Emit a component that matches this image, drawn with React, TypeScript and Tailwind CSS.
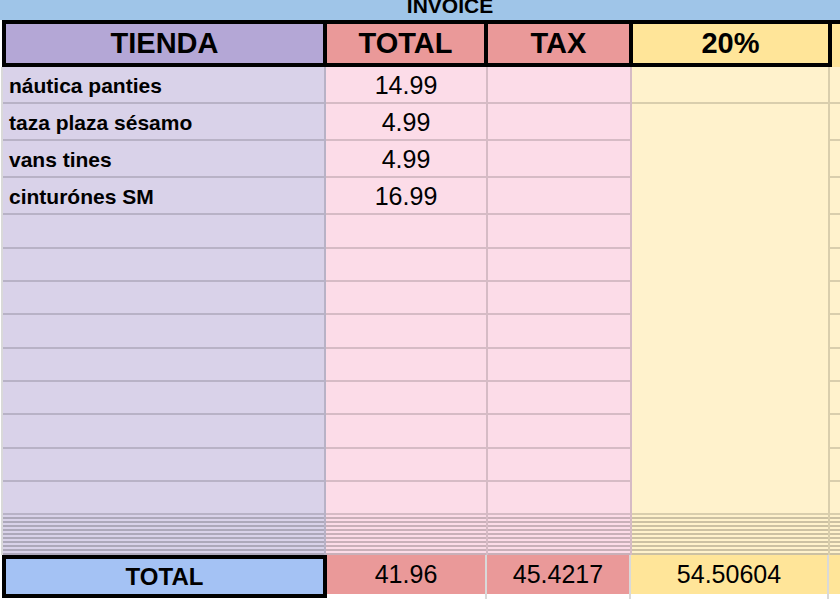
const font = "font-['Liberation_Sans',Arial,sans-serif]";

const rows = [
  { name: "náutica panties", total: "14.99", h: "h-[37px]" },
  { name: "taza plaza sésamo", total: "4.99", h: "h-[37px]" },
  { name: "vans tines", total: "4.99", h: "h-[37px]" },
  { name: "cinturónes SM", total: "16.99", h: "h-[37px]" },
  { name: "", total: "", h: "h-[34px]" },
  { name: "", total: "", h: "h-[33px]" },
  { name: "", total: "", h: "h-[33px]" },
  { name: "", total: "", h: "h-[34px]" },
  { name: "", total: "", h: "h-[33px]" },
  { name: "", total: "", h: "h-[33px]" },
  { name: "", total: "", h: "h-[34px]" },
  { name: "", total: "", h: "h-[33px]" },
  { name: "", total: "", h: "h-[33px]" },
];

// collapsed / hidden rows at the bottom of the sheet
const Stripes = () => (
  <>
    {Array.from({ length: 10 }).map((_, i) => (
      <div key={i} className="h-[4px] border-b-2 border-black/20" />
    ))}
  </>
);

export default function App() {
  return (
    <div className={`${font} w-[840px] h-[599px] overflow-hidden bg-white text-black`}>
      {/* title bar */}
      <div className="h-[20px] bg-[#9fc5e8] flex items-end justify-center overflow-hidden pb-[4px] pl-[60px]">
        <span className="text-[21px] leading-[21px] font-bold">INVOICE</span>
      </div>

      {/* header row */}
      <div className="flex h-[47px]">
        <div className="ml-[2px] w-[830px] flex gap-[4px] p-[4px] bg-black text-[29px] leading-none font-bold">
          <div className="w-[317px] bg-[#b4a7d6] flex items-center justify-center">TIENDA</div>
          <div className="w-[157px] bg-[#ea9999] flex items-center justify-center">TOTAL</div>
          <div className="w-[141px] bg-[#ea9999] flex items-center justify-center">TAX</div>
          <div className="flex-1 bg-[#ffe599] flex items-center justify-center">20%</div>
        </div>
        <div className="flex-1 border-t-4 border-black bg-[#ffe599]" />
      </div>

      {/* body */}
      <div className="flex ml-[1px] border-l-2 border-black/15">
        <div className="w-[323px] flex flex-col bg-[#d9d2e9] border-r-2 border-black/15">
          {rows.map((r, i) => (
            <div
              key={i}
              className={`${r.h} border-b-2 border-black/15 flex items-end pl-[6px] pb-[4px] text-[21px] leading-[24px] font-bold`}
            >
              {r.name}
            </div>
          ))}
          <Stripes />
        </div>
        <div className="w-[162px] flex flex-col bg-[#fcdce8] border-r-2 border-black/15">
          {rows.map((r, i) => (
            <div
              key={i}
              className={`${r.h} border-b-2 border-black/15 flex items-end justify-center pb-[3px] text-[25px] leading-[28px]`}
            >
              {r.total}
            </div>
          ))}
          <Stripes />
        </div>
        <div className="w-[144px] flex flex-col bg-[#fcdce8] border-r-2 border-black/15">
          {rows.map((r, i) => (
            <div key={i} className={`${r.h} border-b-2 border-black/15`} />
          ))}
          <Stripes />
        </div>
        <div className="w-[198px] flex flex-col bg-[#fff2cc] border-r-2 border-black/15">
          <div className="h-[37px] border-b-2 border-black/15" />
          <div className="h-[411px] border-b-2 border-black/15" />
          <Stripes />
        </div>
        <div className="flex-1 flex flex-col bg-[#fff2cc]">
          {rows.map((r, i) => (
            <div key={i} className={`${r.h} border-b-2 border-black/15`} />
          ))}
          <Stripes />
        </div>
      </div>

      {/* totals */}
      <div className="flex h-[44px] text-[25px] leading-none">
        <div className="ml-[2px] w-[325px] h-[43px] border-4 border-black bg-[#a4c2f4] flex items-center justify-center text-[24px] font-bold">
          TOTAL
        </div>
        <div className="w-[160px] border-r-2 border-black/15">
          <div className="h-[39px] bg-[#ea9999] flex items-center justify-center">41.96</div>
        </div>
        <div className="w-[144px] border-r-2 border-black/15">
          <div className="h-[39px] bg-[#ea9999] flex items-center justify-center">45.4217</div>
        </div>
        <div className="w-[198px] border-r-2 border-black/15">
          <div className="h-[39px] bg-[#ffe599] flex items-center justify-center">54.50604</div>
        </div>
        <div className="flex-1">
          <div className="h-[39px] bg-[#ffe599]" />
        </div>
      </div>
    </div>
  );
}
